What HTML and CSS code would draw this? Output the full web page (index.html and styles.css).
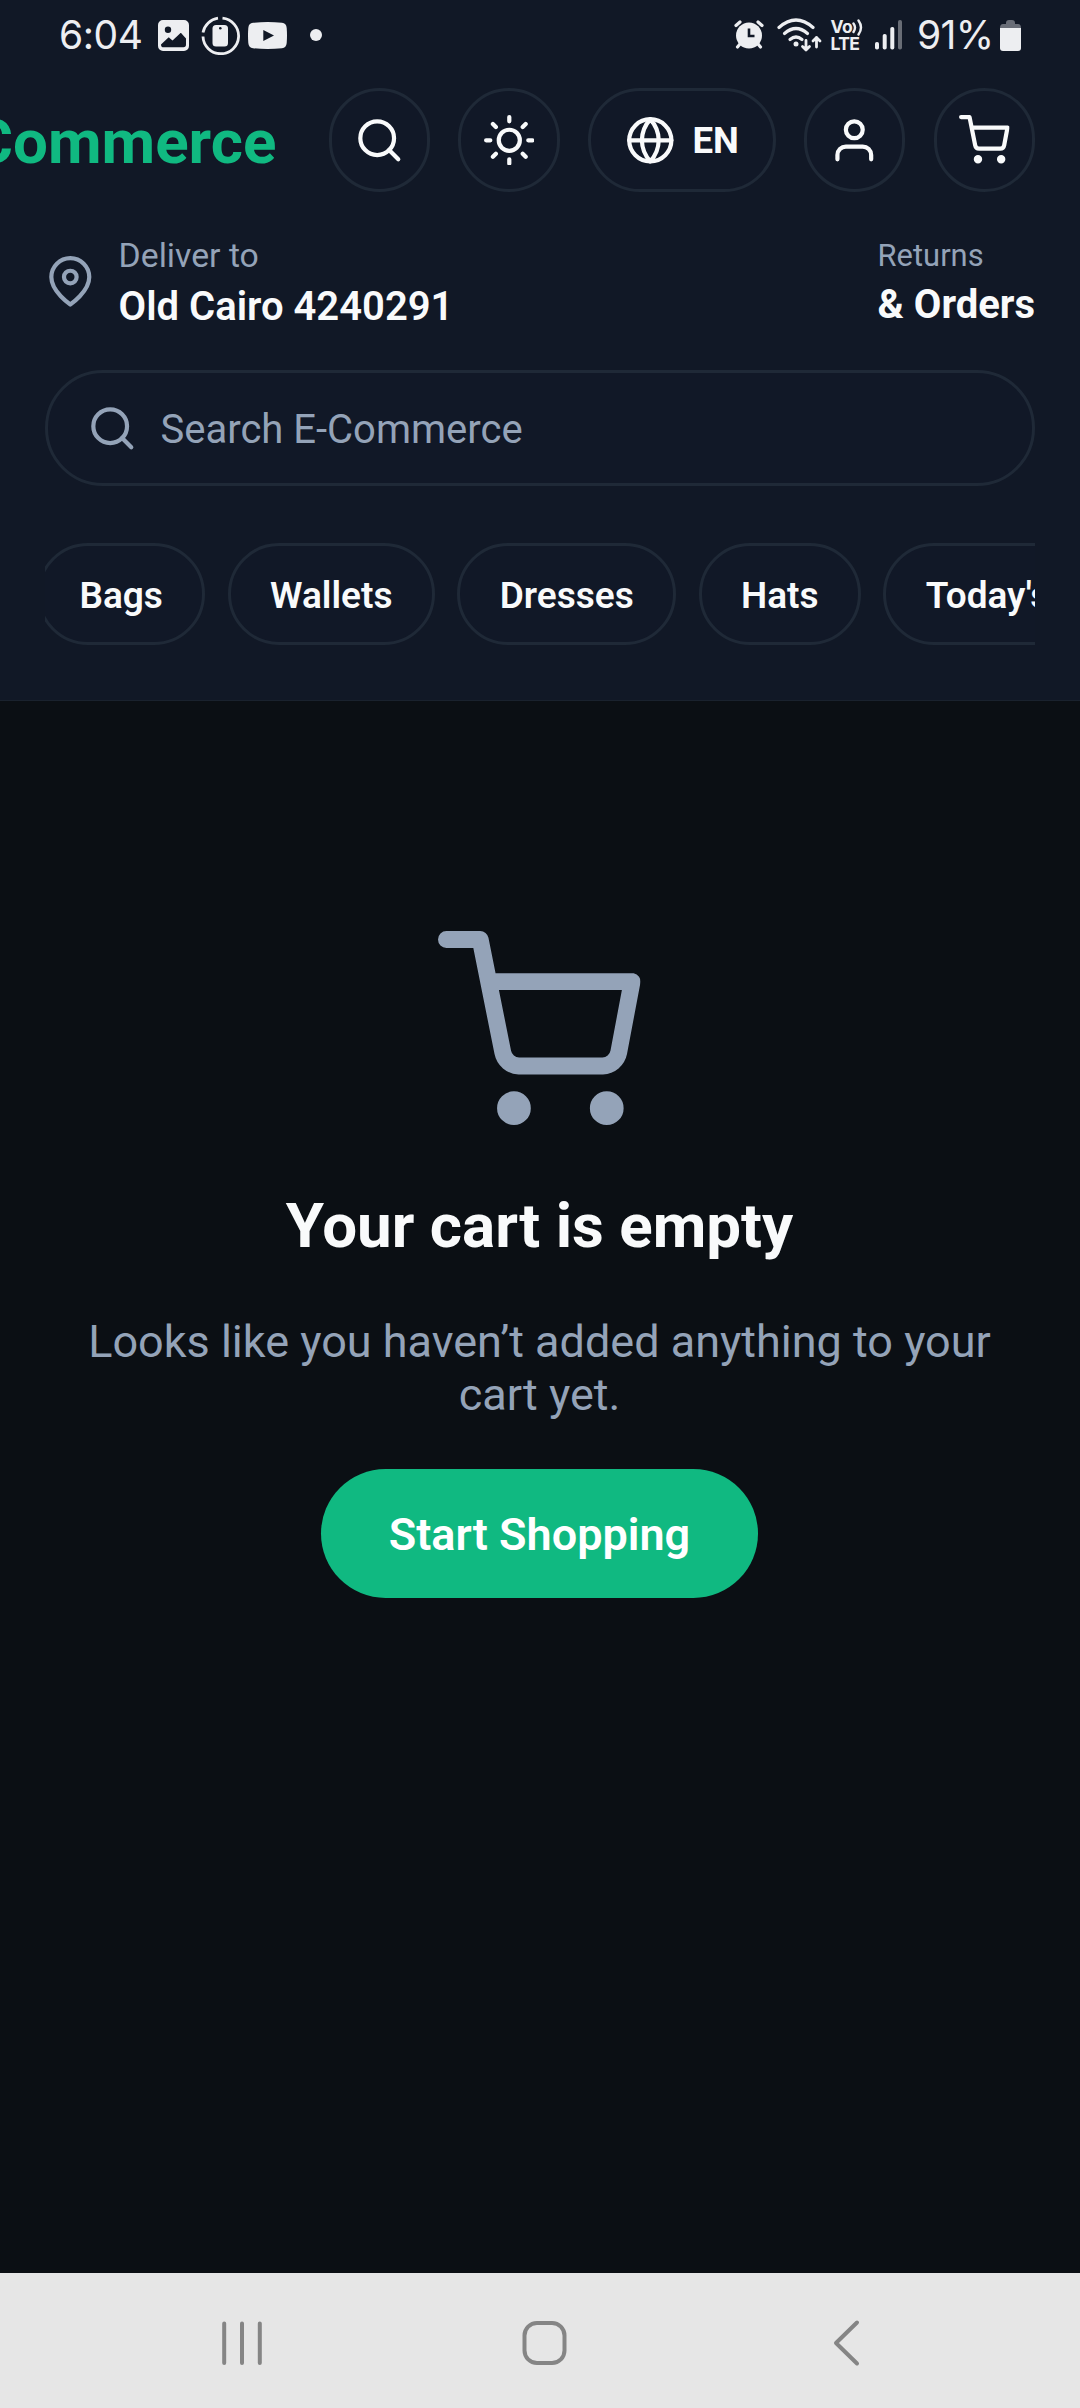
FILE: index.html
```html
<!DOCTYPE html>
<html lang="en">
<head>
<meta charset="utf-8">
<meta name="viewport" content="width=device-width">
<title>E-Commerce – Cart</title>
<link rel="stylesheet" href="styles.css">
</head>
<body>
<svg class="defs" aria-hidden="true">
  <symbol id="search" viewBox="0 0 24 24"><circle cx="11" cy="11" r="8"/><path d="M21 21l-4.35-4.35"/></symbol>
  <symbol id="cart" viewBox="0 0 24 24"><circle cx="9" cy="21" r="1" fill="currentColor"/><circle cx="20" cy="21" r="1" fill="currentColor"/><path d="M1 1h4l2.680 13.390a2 2 0 0 0 1.900 1.610h9.940a2 2 0 0 0 1.900-1.610L23 6H6"/></symbol>
</svg>
<div class="screen">
  <header class="header">
    <div class="status">
      <div class="status-left">
        <span class="clock">6:04</span>
        <svg class="st-image" viewBox="0 0 31 31"><path fill-rule="evenodd" fill="currentColor" d="M5 0H26a5 5 0 0 1 5 5V26a5 5 0 0 1-5 5H5a5 5 0 0 1-5-5V5a5 5 0 0 1 5-5ZM10 6.500a3.200 3.200 0 1 0 0 6.400a3.200 3.200 0 1 0 0-6.400ZM3 24.500c0 2 1 2.800 2.500 2.800H25.500c1.700 0 2.500-1 2.500-2.800V18.500L23.500 13.500c-.5-.6-1-.6-1.500 0L14.500 20.500l-3-2.600c-.6-.5-1-.5-1.600 0L3 24.500Z"/></svg>
        <svg class="st-ring" viewBox="0 0 39 39"><g fill="none" stroke="currentColor" stroke-width="2.800"><path d="M21.500 2.200A17.800 17.800 0 1 1 2 20.500"/><path d="M2 16.500A17.800 17.800 0 0 1 17 2.200"/></g><rect x="11.500" y="9" width="15.500" height="21.500" rx="3.500" fill="currentColor"/><circle cx="19.300" cy="12.300" r="1.300" fill="#111827"/></svg>
        <svg class="st-video" viewBox="0 0 39 27"><path fill-rule="evenodd" fill="currentColor" d="M5 .8Q19.500-.8 34 .8Q38.300 1.300 38.700 6Q39.300 13.500 38.700 21Q38.300 25.700 34 26.200Q19.500 27.800 5 26.200Q.7 25.700.3 21Q-.3 13.500.3 6Q.7 1.300 5 .8ZM15.300 8V19L26 13.500Z"/></svg>
        <span class="st-dot"></span>
      </div>
      <div class="status-right">
        <svg class="st-alarm" viewBox="0 0 30 30"><g fill="none" stroke="currentColor" stroke-width="3.200" stroke-linecap="round"><path d="M2 5.500L6 2M28 5.500L24 2M6 24L3.500 27M24 24l2.500 3"/></g><circle cx="15" cy="15.500" r="13" fill="currentColor"/><path d="M15 8.500V16h5.500" fill="none" stroke="#111827" stroke-width="2.600"/></svg>
        <svg class="st-wifi" viewBox="0 0 45 34"><g fill="none" stroke="currentColor" stroke-width="3.200" stroke-linecap="round"><path d="M2 9.500Q19 -5.500 36 9.500"/><path d="M7.500 15.500Q19 5.500 30.500 15.500"/><path d="M13 21.500Q19 16.500 25 21.500"/></g><circle cx="19" cy="26" r="2.500" fill="currentColor"/><g fill="none" stroke="currentColor" stroke-width="2.800" stroke-linecap="round" stroke-linejoin="round"><path d="M29 22.500V32M25.500 28.500L29 32l3.500-3.500M39.500 29V19.500M36 23l3.500-3.500L43 23"/></g></svg>
        <span class="volte"><span class="vo">Vo<svg viewBox="0 0 11 17"><path d="M1.500 4.500Q4.500 8.500 1.500 13M6.500 1.500Q11.500 8.500 6.500 15.500" fill="none" stroke="currentColor" stroke-width="2.400" stroke-linecap="round"/></svg></span><span>LTE</span></span>
        <svg class="st-signal" viewBox="0 0 28 30"><g fill="currentColor"><rect x="0" y="22" width="4" height="7.500" rx="1.800"/><rect x="7.700" y="14" width="4" height="15.500" rx="1.800"/><rect x="15.300" y="7" width="4" height="22.500" rx="1.800"/><rect x="23" y="0" width="4" height="29.500" rx="1.800" opacity=".4"/></g></svg>
        <span class="percent">91%</span>
        <svg class="st-battery" viewBox="0 0 21 31"><path d="M6 3q0-3 3-3h3q3 0 3 3v1h3q3 0 3 4H0q0-4 3-4h3Z" fill="#696d77"/><path d="M0 8h21V28q0 3-3 3H3q-3 0-3-3Z" fill="currentColor"/></svg>
      </div>
    </div>

    <div class="toolbar">
      <div class="logo">E-Commerce</div>
      <button class="round"><svg class="icon"><use href="#search"/></svg></button>
      <button class="round"><svg class="icon" viewBox="0 0 24 24"><circle cx="12" cy="12" r="5"/><path d="M12 1v2M12 21v2M4.220 4.220l1.420 1.420M18.360 18.360l1.420 1.420M1 12h2M21 12h2M4.220 19.780l1.420-1.420M18.360 5.640l1.420-1.420"/></svg></button>
      <button class="round lang"><svg class="icon" viewBox="0 0 24 24"><circle cx="12" cy="12" r="10"/><path d="M2 12h20M12 2a15.300 15.300 0 0 1 4 10 15.300 15.300 0 0 1-4 10 15.300 15.300 0 0 1-4-10 15.300 15.300 0 0 1 4-10z"/></svg><span>EN</span></button>
      <button class="round"><svg class="icon" viewBox="0 0 24 24"><path d="M20 21v-2a4 4 0 0 0-4-4H8a4 4 0 0 0-4 4v2"/><circle cx="12" cy="7" r="4"/></svg></button>
      <button class="round"><svg class="icon"><use href="#cart"/></svg></button>
    </div>

    <div class="delivery">
      <div class="address">
        <svg class="icon muted" viewBox="0 0 24 24"><path d="M21 10c0 7-9 13-9 13s-9-6-9-13a9 9 0 0 1 18 0z"/><circle cx="12" cy="10" r="3"/></svg>
        <div>
          <div class="deliver-label">Deliver to</div>
          <div class="deliver-value">Old Cairo 4240291</div>
        </div>
      </div>
      <div class="returns">
        <div class="returns-label">Returns</div>
        <div class="returns-value">&amp; Orders</div>
      </div>
    </div>

    <div class="searchbar">
      <svg class="icon"><use href="#search"/></svg>
      <span>Search E-Commerce</span>
    </div>

    <nav class="chips">
      <span class="chip first">Bags</span>
      <span class="chip">Wallets</span>
      <span class="chip">Dresses</span>
      <span class="chip">Hats</span>
      <span class="chip">Today's Deals</span>
    </nav>
  </header>

  <main class="empty">
    <svg class="icon big-cart"><use href="#cart"/></svg>
    <h1>Your cart is empty</h1>
    <p>Looks like you haven’t added anything to your cart yet.</p>
    <button class="cta">Start Shopping</button>
  </main>

  <footer class="navbar">
    <svg viewBox="0 0 48 50"><path d="M6.200 5.500V45M24 5.500V45M41.800 5.500V45"/></svg>
    <svg viewBox="0 0 48 50"><rect x="3.500" y="5" width="40" height="40" rx="12.500"/></svg>
    <svg viewBox="0 0 48 50"><path d="M34 4.500L13 25l21 20.500"/></svg>
  </footer>
</div>
</body>
</html>
```

FILE: styles.css
```css
* { box-sizing: border-box; }

body {
  margin: 0;
  background: #0b0f14;
  font-family: Roboto, "Liberation Sans", sans-serif;
  color: #f9fafb;
}

button {
  font-family: inherit;
  color: inherit;
  padding: 0;
  margin: 0;
}

.defs {
  display: none;
}

.screen {
  width: 1080px;
  height: 2408px;
  display: flex;
  flex-direction: column;
  overflow: hidden;
}

.icon {
  width: 50.6px;
  height: 50.6px;
  flex: none;
  display: block;
  fill: none;
  stroke: currentColor;
  stroke-width: 2;
  stroke-linecap: round;
  stroke-linejoin: round;
}

.muted { color: #94a3b8; }

/* Header */
.header {
  height: 701px;
  flex: none;
  background: #111826;
  border-bottom: 1px solid #1a222e;
  padding: 0 45px;
}

/* System status bar */
.status {
  height: 70px;
  margin: 0 14px;
  display: flex;
  justify-content: space-between;
  align-items: center;
  color: #edeef1;
  font-family: Inter, sans-serif;
}

.status-left,
.status-right {
  display: flex;
  align-items: center;
  height: 70px;
}

.clock {
  width: 99px;
  font-size: 39px;
  line-height: 70px;
  letter-spacing: -0.4px;
}

.st-image { width: 31px; height: 31px; }
.st-ring { width: 39px; height: 39px; margin-left: 12px; }
.st-video { width: 39px; height: 27px; margin-left: 8px; }
.st-dot { width: 12px; height: 12px; margin-left: 23px; border-radius: 50%; background: currentColor; }

.st-alarm { width: 30px; height: 30px; }
.st-wifi { width: 45px; height: 34px; margin-left: 13px; }

.volte {
  display: flex;
  flex-direction: column;
  width: 31px;
  margin-left: 9px;
  font-size: 17.5px;
  line-height: 16px;
  font-weight: 700;
  letter-spacing: -0.6px;
}

.vo { display: flex; }
.vo svg { width: 11px; height: 17px; flex: none; }

.st-signal { width: 28px; height: 30px; margin-left: 13px; }

.percent {
  width: 83px;
  margin-left: 14.5px;
  font-size: 39px;
  line-height: 70px;
  letter-spacing: -0.7px;
}

.st-battery { width: 21px; height: 31px; }

/* Logo and actions */
.toolbar {
  display: flex;
  justify-content: flex-end;
  align-items: stretch;
  gap: 28.3px;
  height: 104px;
  margin-top: 18px;
}

.logo {
  flex: none;
  margin-right: 24px;
  font-size: 61.9px;
  line-height: 109px;
  font-weight: 700;
  color: #10b981;
}

.round {
  flex: none;
  width: 101.3px;
  display: flex;
  align-items: center;
  justify-content: center;
  border: 3px solid #1f2937;
  border-radius: 52px;
  background: #111827;
}

.lang {
  width: 188px;
  gap: 17px;
  font-size: 36.6px;
  font-weight: 700;
}

/* Delivery row */
.delivery {
  display: flex;
  justify-content: space-between;
  height: 178px;
  padding-top: 43.5px;
}

.address {
  display: flex;
  gap: 23px;
}

.address .icon { margin-top: 20.5px; }

.deliver-label,
.returns-label { color: #94a3b8; }

.deliver-label {
  font-size: 33.75px;
  line-height: 40px;
}

.deliver-value {
  margin-top: 8px;
  font-size: 40px;
  line-height: 46px;
  font-weight: 600;
}

.returns-label {
  margin-top: 1.5px;
  font-size: 30.9px;
  line-height: 37px;
}

.returns-value {
  margin-top: 8px;
  font-size: 40px;
  line-height: 46px;
  font-weight: 700;
}

/* Search */
.searchbar {
  display: flex;
  align-items: center;
  gap: 22.5px;
  height: 116px;
  padding: 0 39.4px;
  border: 3px solid #1f2937;
  border-radius: 58px;
  background: #111827;
  color: #94a3b8;
  font-size: 40px;
}

.searchbar span { padding-top: 3px; }

/* Categories */
.chips {
  display: flex;
  gap: 22.5px;
  height: 102px;
  margin-top: 57px;
  overflow: hidden;
}

.chip {
  flex: none;
  padding: 0 39.4px;
  border: 3px solid #1f2937;
  border-radius: 51px;
  background: #111827;
  font-size: 37px;
  line-height: 99px;
  font-weight: 600;
}

.first { margin-left: -8px; }

/* Empty cart */
.empty {
  flex: 1;
  display: flex;
  flex-direction: column;
  align-items: center;
  padding: 229.5px 46px 0 45px;
}

.big-cart {
  width: 202.5px;
  height: 202.5px;
  color: #94a3b8;
}

h1 {
  margin: 57px 0 0;
  font-size: 61.9px;
  line-height: 73px;
  font-weight: 700;
}

p {
  margin: 52px 0 0;
  font-size: 45px;
  line-height: 53px;
  text-align: center;
  color: #94a3b8;
}

.cta {
  width: 437px;
  height: 129px;
  margin-top: 47.5px;
  padding-top: 2px;
  border: 0;
  border-radius: 64.5px;
  background: #10b981;
  color: #fff;
  font-size: 45px;
  font-weight: 600;
}

/* System navigation */
.navbar {
  flex: none;
  height: 135px;
  padding: 45px 209px 0 218px;
  display: flex;
  justify-content: space-between;
  background: #e6e6e6;
}

.navbar svg {
  width: 48px;
  height: 50px;
  fill: none;
  stroke: #858585;
  stroke-width: 4;
  stroke-linecap: round;
  stroke-linejoin: round;
}
```
